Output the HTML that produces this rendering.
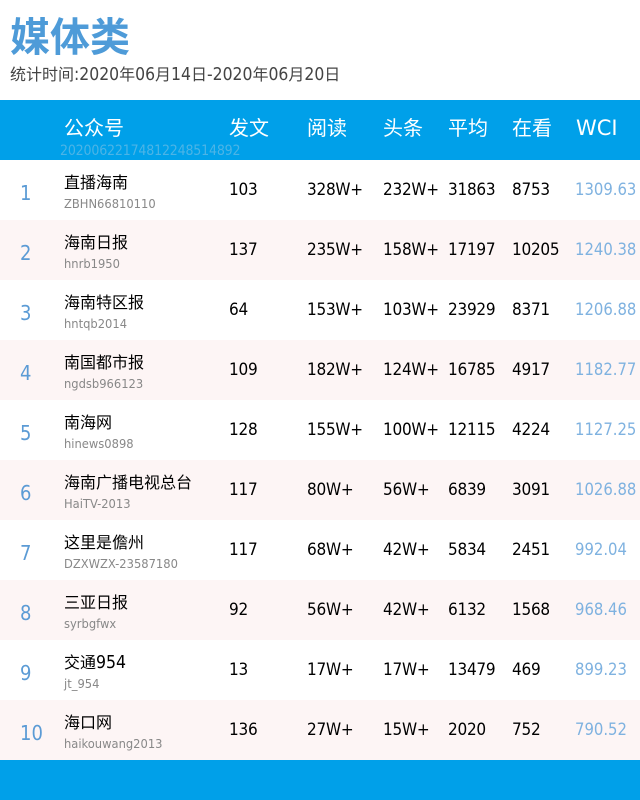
<!DOCTYPE html>
<html lang="zh"><head><meta charset="utf-8"><title>媒体类</title>
<style>
html,body{margin:0;padding:0;background:#fff}
body{width:640px;height:800px;position:relative;overflow:hidden;font-family:"DejaVu Sans Condensed","WenQuanYi Zen Hei","Noto Sans CJK SC",sans-serif}
div{position:absolute;white-space:nowrap}
.t{left:10px;top:13px;font-size:40px;line-height:50px;font-weight:bold;color:#4e9bd8}
.s{left:10px;top:63px;font-size:16px;line-height:24px;color:#444}
.s span{font-size:17.4px}
.h{left:0;top:100px;width:640px;height:60px;background:#00a0e9}
.h div{top:13px;font-size:20px;line-height:30px;color:#fff}
.h .w{left:60px;top:41px;font-size:14px;line-height:20px;color:#4cb4e6;letter-spacing:-.17px}
.f{left:0;top:760px;width:640px;height:40px;background:#00a0e9}
.r{left:0;width:640px;height:60px;color:#000;font-size:17px;letter-spacing:-.25px}
.p{background:#fdf5f5}
.r div{top:18px;line-height:24px}
.r .k{left:20px;top:21px;font-size:20px;color:#5b9bd5;letter-spacing:0}
.r .n{left:64px;top:11px;letter-spacing:0;font-size:16px}
.r .n span{font-size:17.5px}
.r .i{left:64px;top:35px;font-size:12.8px;line-height:20px;color:#888;letter-spacing:0}
.r .a{left:229px}.r .b{left:307px}.r .c{left:383px}.r .d{left:448px}.r .e{left:512px}
.r .g{left:575px;color:#7fb2e0;font-size:16.5px;letter-spacing:0}
</style></head><body>
<div class="t">媒体类</div>
<div class="s">统计时间<span>:2020</span>年<span>06</span>月<span>14</span>日<span>-2020</span>年<span>06</span>月<span>20</span>日</div>
<div class="h">
<div style="left:64px">公众号</div><div style="left:229px">发文</div><div style="left:307px">阅读</div><div style="left:383px">头条</div><div style="left:448px">平均</div><div style="left:512px">在看</div><div style="left:576px;font-family:'DejaVu Sans',sans-serif;font-size:21px">WCI</div>
<div class="w">20200622174812248514892</div>
</div>
<div class="r" style="top:160px"><div class="k">1</div><div class="n">直播海南</div><div class="i">ZBHN66810110</div><div class="a">103</div><div class="b">328W+</div><div class="c">232W+</div><div class="d">31863</div><div class="e">8753</div><div class="g">1309.63</div></div>
<div class="r p" style="top:220px"><div class="k">2</div><div class="n">海南日报</div><div class="i">hnrb1950</div><div class="a">137</div><div class="b">235W+</div><div class="c">158W+</div><div class="d">17197</div><div class="e">10205</div><div class="g">1240.38</div></div>
<div class="r" style="top:280px"><div class="k">3</div><div class="n">海南特区报</div><div class="i">hntqb2014</div><div class="a">64</div><div class="b">153W+</div><div class="c">103W+</div><div class="d">23929</div><div class="e">8371</div><div class="g">1206.88</div></div>
<div class="r p" style="top:340px"><div class="k">4</div><div class="n">南国都市报</div><div class="i">ngdsb966123</div><div class="a">109</div><div class="b">182W+</div><div class="c">124W+</div><div class="d">16785</div><div class="e">4917</div><div class="g">1182.77</div></div>
<div class="r" style="top:400px"><div class="k">5</div><div class="n">南海网</div><div class="i">hinews0898</div><div class="a">128</div><div class="b">155W+</div><div class="c">100W+</div><div class="d">12115</div><div class="e">4224</div><div class="g">1127.25</div></div>
<div class="r p" style="top:460px"><div class="k">6</div><div class="n">海南广播电视总台</div><div class="i">HaiTV-2013</div><div class="a">117</div><div class="b">80W+</div><div class="c">56W+</div><div class="d">6839</div><div class="e">3091</div><div class="g">1026.88</div></div>
<div class="r" style="top:520px"><div class="k">7</div><div class="n">这里是儋州</div><div class="i">DZXWZX-23587180</div><div class="a">117</div><div class="b">68W+</div><div class="c">42W+</div><div class="d">5834</div><div class="e">2451</div><div class="g">992.04</div></div>
<div class="r p" style="top:580px"><div class="k">8</div><div class="n">三亚日报</div><div class="i">syrbgfwx</div><div class="a">92</div><div class="b">56W+</div><div class="c">42W+</div><div class="d">6132</div><div class="e">1568</div><div class="g">968.46</div></div>
<div class="r" style="top:640px"><div class="k">9</div><div class="n">交通<span>954</span></div><div class="i">jt_954</div><div class="a">13</div><div class="b">17W+</div><div class="c">17W+</div><div class="d">13479</div><div class="e">469</div><div class="g">899.23</div></div>
<div class="r p" style="top:700px"><div class="k">10</div><div class="n">海口网</div><div class="i">haikouwang2013</div><div class="a">136</div><div class="b">27W+</div><div class="c">15W+</div><div class="d">2020</div><div class="e">752</div><div class="g">790.52</div></div>
<div class="f"></div>
</body></html>
